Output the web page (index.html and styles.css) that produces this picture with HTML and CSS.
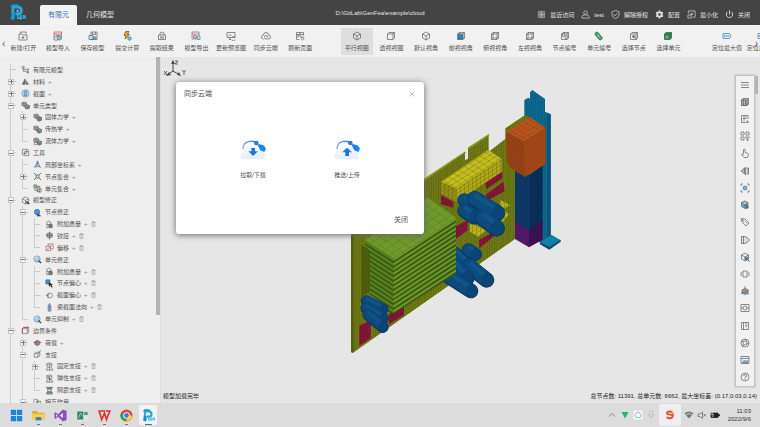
FILE: index.html
```html
<!DOCTYPE html>
<html lang="zh-CN">
<head>
<meta charset="utf-8">
<title>GenFea</title>
<link rel="stylesheet" href="styles.css">
</head>
<body>
<header class="titlebar">
  <svg class="logo" viewBox="0 0 48 48" aria-hidden="true"><use href="#brand"/></svg>
  <nav class="tabs">
    <button class="tab tab-active">有限元</button>
    <button class="tab">几何模型</button>
  </nav>
  <div class="path">D:\GitLab\GenFea\example\cloud</div>
  <div class="actions" id="actions"></div>
</header>
<div class="ribbon"><div class="ribbon-grid" id="ribbon"></div><span class="arrow arrow-left">‹</span><span class="arrow arrow-right">›</span></div>
<div class="workspace">
  <aside class="sidebar">
    <ul class="tree" id="tree" role="tree"></ul>
    <div class="scroll-thumb"></div>
  </aside>
  <main class="canvas">
    <svg class="axes" viewBox="0 0 26 20" aria-hidden="true">
      <path d="M10 12V2M10 12L4 16M10 12l7 4" stroke="#444" fill="none"/>
      <path d="M10 1l-2 4h4zM3 17l5-1-2-3zM18 17l-2-4-2 3z" fill="#4a4a4a"/>
      <path d="M12 2h3l-3 3h3M1 12l3 4m0-4l-3 4M19 11l2 2 2-2m-2 2v3" stroke="#444" fill="none" stroke-width=".8"/>
    </svg>
    <svg class="model" id="model" viewBox="0 0 690 810" role="img" aria-label="模型"></svg>
    <div class="status"><span>模型加载完毕</span><span>总节点数: 11391, 总单元数: 6662, 最大坐标差: (0.17,0.03,0.14)</span></div>
    <div class="toolstrip" id="toolstrip"></div>
    <section class="dialog" role="dialog" aria-labelledby="dlg-title">
      <div class="dialog-head">
        <h2 id="dlg-title">同步云端</h2>
        <button class="dialog-x" aria-label="关闭"><svg viewBox="0 0 10 10"><path d="M1 1l8 8M9 1L1 9" stroke="#999" fill="none"/></svg></button>
      </div>
      <div class="dialog-body">
        <button class="card"><svg viewBox="0 0 84 72"><use href="#cloud"/><path d="M37 30h11v10h9L42 54 28 40h9z" fill="#1676ea"/></svg>拉取/下载</button>
        <button class="card"><svg viewBox="0 0 84 72"><use href="#cloud"/><path d="M37 54h11V43h9L42 29 28 43h9z" fill="#1676ea"/></svg>推送/上传</button>
      </div>
      <div class="dialog-foot"><button>关闭</button></div>
    </section>
  </main>
</div>
<footer class="taskbar">
  <div class="apps" id="apps"></div>
  <div class="tray" id="tray"></div>
  <div class="clock"><span>11:03</span><span>2022/9/6</span></div>
</footer>
<svg class="defs" aria-hidden="true">
  <defs>
    <linearGradient id="cg" x1="0" y1="0" x2="0" y2="1"><stop offset="0" stop-color="#fafcff"/><stop offset="1" stop-color="#e6eefb"/></linearGradient>
    <linearGradient id="ag" x1="0" y1="0" x2="1" y2="0"><stop offset="0" stop-color="#8e9cf0"/><stop offset="1" stop-color="#1d7cf0"/></linearGradient>
    <symbol id="brand" viewBox="0 0 48 48">
      <path d="M11 39V9h13q11 0 11 10 0 9-11 9h-6" fill="none" stroke="#27a8e0" stroke-width="8"/>
      <path d="M2 8l8-7h14l10 6H14zM7 26h10v14l-4 6-9-4z" fill="#1792cc"/>
      <path d="M22 16l6 3-6 4z" fill="#d8f3ff"/>
      <path d="M29 33h-5v8h5v-4M37 33h-5v9h5M32 37h4M40 42v-9h6v9M40 37h5" fill="none" stroke="#2bb5e8" stroke-width="3"/>
    </symbol>
    <symbol id="cloud" viewBox="0 0 84 72">
      <path d="M14 64Q2 63 4 50q2-9 12-11 2-18 20-20 17-2 24 16 16 0 18 15 0 13-14 14z" fill="url(#cg)"/>
      <path d="M12 34Q12 15 28 11q15-4 27 5" stroke="url(#ag)" stroke-width="4" fill="none"/>
      <circle cx="52" cy="15" r="7" fill="#2c78ee"/>
      <path d="M55 19q13-2 20 4l6 9-5 10-12-5-7-13z" fill="#1486f5"/>
    </symbol>
  </defs>
</svg>
<script src="app.js"></script>
</body>
</html>
```
FILE: styles.css
```css
* { box-sizing: border-box; }
body {
  margin: 0;
  height: 100vh;
  display: flex;
  flex-direction: column;
  overflow: hidden;
  font: 6px/8px "Liberation Sans", "Noto Sans CJK SC", sans-serif;
  color: #505050;
  background: #e6e6e6;
}
button {
  border: 0;
  padding: 0;
  margin: 0;
  background: none;
  font: inherit;
  color: inherit;
}
svg { display: block; }
.defs { position: absolute; width: 0; height: 0; }
.ico { width: 10px; height: 10px; flex: none; fill: none; stroke: #666; stroke-width: 1.5; }

.titlebar {
  position: relative;
  flex: none;
  height: 25px;
  display: flex;
  align-items: flex-end;
  background: #444;
  color: #e4e4e4;
}
.logo { width: 17px; height: 17px; margin: 0 14px 4px 9px; }
.tabs { display: flex; }
.tab { height: 20px; padding: 0 9px; font-size: 7px; border-radius: 2px 2px 0 0; }
.tab-active { padding: 0 8px; background: #f3f3f3; color: #3e6fc4; }
.path { position: absolute; left: 50%; top: 9px; transform: translateX(-50%); }
.actions { margin-left: auto; display: flex; gap: 7px; padding: 0 10px 6px 0; }
.actions button { display: flex; align-items: center; gap: 4px; }
.actions .ico { width: 9px; height: 9px; stroke: #e0e0e0; }

.ribbon { position: relative; flex: none; height: 32px; overflow: hidden; background: #f1f1f1; }
.ribbon-grid {
  display: grid;
  grid-template-columns: repeat(9, 1fr) 22px repeat(10, 1fr) 24px repeat(2, 1fr);
  margin: 3px -19px 0 6px;
}
.ribbon button {
  display: flex;
  flex-direction: column;
  align-items: center;
  gap: 3px;
  height: 27px;
  padding-top: 3px;
  margin: 0 1px;
  min-width: 0;
  white-space: nowrap;
}
.ribbon .on { background: #dedede; }
.arrow { position: absolute; top: 15px; font-size: 10px; }
.arrow-left { left: 2px; }
.arrow-right { right: 2px; }

.workspace { flex: 1; min-height: 0; display: flex; }
.sidebar {
  position: relative;
  flex: none;
  width: 161px;
  display: flex;
  overflow: hidden;
  background: #eee;
  border-right: 1px solid #dcdcdc;
}
.tree {
  flex: 1;
  display: grid;
  grid-auto-rows: 1fr;
  margin: 7px 0 -5px 5px;
  padding: 0;
  list-style: none;
}
.tree li { display: flex; align-items: center; min-height: 0; white-space: nowrap; }
.rail { align-self: stretch; position: relative; width: 12px; flex: none; }
.rail-line { background: linear-gradient(#ccc, #ccc) 5px 0 / 1px 100% no-repeat; }
.rail-tee { background: linear-gradient(#ccc, #ccc) 5px 0 / 1px 100% no-repeat, linear-gradient(#ccc, #ccc) 5px 50% / 6px 1px no-repeat; }
.rail-end { background: linear-gradient(#ccc, #ccc) 5px 0 / 1px 50% no-repeat, linear-gradient(#ccc, #ccc) 5px 50% / 6px 1px no-repeat; }
.toggle {
  position: absolute;
  left: 3px;
  top: 3px;
  width: 6px;
  height: 6px;
  border: 1px solid #c4c4c4;
  background: linear-gradient(#777, #777) center / 4px 1px no-repeat #f8f8f8;
}
.toggle-plus { background: linear-gradient(#777, #777) center / 4px 1px no-repeat, linear-gradient(#777, #777) center / 1px 4px no-repeat, #f8f8f8; }
.tree .ico { width: 9px; height: 9px; margin: 0 3px 0 4px; }
.add, .del { margin-left: 3px; color: #888; }
.del svg { width: 5px; height: 6px; fill: none; stroke: #888; }
.scroll-thumb { width: 4px; height: 258px; flex: none; background: #b3b3b3; }

.canvas { position: relative; flex: 1; min-width: 0; display: flex; flex-direction: column; justify-content: flex-end; }
.axes { position: absolute; left: 2px; top: 2px; width: 26px; height: 20px; }
.model { position: absolute; left: 179px; top: 28px; width: 230px; height: 270px; }
.status { display: flex; justify-content: space-between; padding: 0 3px 3px 2px; color: #222; }
.toolstrip {
  position: absolute;
  top: 18px;
  right: 5px;
  bottom: 16px;
  width: 20px;
  display: flex;
  flex-direction: column;
  justify-content: space-around;
  align-items: center;
  background: #f1f1f1;
  border: 1px solid #c2c2c2;
  box-shadow: 0 0 2px #aaa;
}
.toolstrip::after { content: ""; position: absolute; right: -4px; top: 0; width: 3px; height: 18px; background: #b5b5b5; }

.dialog {
  position: absolute;
  left: 15px;
  top: 25px;
  width: 248px;
  padding: 8px;
  background: #fff;
  border-radius: 3px;
  box-shadow: 0 1px 6px #666;
}
.dialog-head { display: flex; justify-content: space-between; align-items: center; height: 8px; }
.dialog h2 { margin: 0; font-size: 7px; font-weight: 400; }
.dialog-x svg { width: 6px; height: 6px; margin-right: 1px; }
.dialog-body { display: flex; justify-content: center; gap: 34px; padding: 32px 0 24px; }
.card { width: 60px; height: 62px; display: flex; flex-direction: column; align-items: center; gap: 9px; padding-top: 8px; box-shadow: 0 0 4px #fafafa; }
.card svg { width: 28px; height: 24px; }
.dialog-foot { display: flex; justify-content: flex-end; padding: 0 8px 2px 0; font-size: 7px; }

.taskbar { flex: none; height: 24px; display: flex; align-items: center; background: #dcdcdc; }
.apps { display: flex; gap: 4px; padding-left: 7px; }
.apps button { position: relative; width: 18px; height: 20px; display: grid; place-items: center; border-radius: 2px; }
.apps svg { width: 13px; height: 13px; }
.apps button::after { content: ""; position: absolute; bottom: 0; left: 8px; width: 3px; height: 1px; background: #777; }
.apps button:first-child::after { display: none; }
.apps .open { background: #f3f3f3; }
.apps .open::after { left: 6px; width: 7px; background: #147fc4; }
.tray { margin-left: auto; display: flex; align-items: center; gap: 3px; padding-right: 6px; }
.tray .ime { width: 22px; height: 22px; display: grid; place-items: center; background: #f0eeee; border-radius: 2px; }
.clock { display: flex; flex-direction: column; align-items: flex-end; width: 25px; margin-right: 9px; color: #333; }
```
FILE: app.js
```js
const cube = '<path d="M10 2l7 4v8l-7 4-7-4V6zM3 6l7 4 7-4M10 10v8"/>';
const box = '<path d="M3 6h11v11H3zM3 6l3-3h11v11l-3 3M14 6l3-3"/>';
const boxWire = box + '<path d="M6 3v11h11M6 14l-3 3"/>';
const cells = '<path d="M2 4l5-2 5 2v6l-5 2-5-2zM2 4l5 2 5-2M7 6v6" fill="#aaa"/><path d="M9 10l5-2 5 2v6l-5 2-5-2zM9 10l5 2 5-2M14 12v6" fill="#888"/>';
const globe = '<circle cx="9" cy="9" r="7" fill="#a9cdea" stroke="#6f8aa0"/><path d="M4 8q1-4 5-4" stroke="#fff"/><path d="M12 12l6 6" stroke="#444" stroke-width="3"/>';
const support = '<path d="M4 4l6-2 5 2v6l-5 2-6-2zM4 4l6 2 5-2M10 6v6M3 18h15M6 12l-3 6M14 12l3 6M10 12v6"/>';
const icons = {
  grid: '<path d="M3 3h14v14H3zM3 7h14M3 10h14M3 13h14M7 3v14M10 3v14M13 3v14" stroke-width="1"/>',
  user: '<circle cx="10" cy="6" r="4"/><path d="M2 18v-3q0-4 6-4h4q6 0 6 4v3z"/>',
  shield: '<path d="M10 1l8 3v6q0 6-8 9-8-3-8-9V4zM6 9l3 4 5-6"/>',
  gearBold: '<circle cx="10" cy="10" r="5" stroke-width="4"/><path d="M10 1v3M10 16v3M2 6l3 1M15 13l3 1M2 14l3-1M15 7l3-1" stroke-width="3"/>',
  minimize: '<path d="M3 8V2h15v14h-6M2 11h7v7H2zM9 10l5-5M9 6v4h4"/>',
  power: '<path d="M6 4a7 7 0 1 0 8 0M10 1v9" stroke-width="2"/>',
  folderNew: '<path d="M2 6h6l2 2h8v10H2zM5 5V2h11v5M10 10v6M7 13h6"/>',
  importModel: '<path d="M2 12V2h15v13M2 6h15" stroke="#b55"/><path d="M5 9h9M2 12h8v6H2z"/><circle cx="13" cy="14" r="4" fill="#8cc7e5" stroke="#478"/>',
  save: '<path d="M6 2h12v15H6zM9 2v5h6V2"/><path d="M2 9h8v8H2z" fill="#cde"/><circle cx="13" cy="14" r="3" fill="#5bb5d8" stroke="#478"/>',
  calc: '<path d="M7 1h7l-3 6h4l-9 9 2-7H4z" fill="#e3a92c" stroke="#7a5a1a"/><circle cx="15" cy="15" r="3.5" fill="#7cc3e0" stroke="#478"/>',
  extract: '<path d="M3 8h14v9H3zM6 8V4l4-2 4 2v4M6 12h8M6 14h8"/>',
  exportModel: '<path d="M2 2h14v8M2 2v14h8M2 6h14" stroke="#a66"/><path d="M5 9h5v5H5z"/><path d="M12 10h6v7h-6zM9 14h7" stroke="#48a"/>',
  preview: '<path d="M2 3h16v10H2zM6 17h4M8 13v4M5 10l3-3 3 3"/><path d="M12 14a3 3 0 0 1 6 0M18 17a3 3 0 0 1-6 0" stroke="#47a"/>',
  sync: '<path d="M5 16a4 4 0 0 1 0-8 5 5 0 0 1 10 0 4 4 0 0 1 0 8h-2M7 12a3 3 0 0 1 6 0M13 13a3 3 0 0 1-6 0"/>',
  refresh: '<path d="M9 17H3V3h14v6M3 7h14M6 7v6M10 3v6M6 10h5M12 14a3 3 0 1 1 1 3M12 11v3h3"/>',
  cube, box, boxWire,
  front: boxWire + '<path d="M5 7h8v9H5z" fill="#2b8bc4" stroke="#26658c"/>',
  nodeNo: box + '<circle cx="7" cy="8" r="3" fill="#d6d6c0"/><circle cx="13" cy="13" r="3" fill="#ddd"/>',
  link: '<path d="M3 3l4-1 10 12-3 4-4-1L2 7z" fill="#4aa070" stroke="#27704a"/><path d="M7 8l4 4" stroke="#fff"/>',
  pickNode: box + '<circle cx="9" cy="11" r="2" fill="#777"/><path d="M9 11l7 6"/>',
  pickCell: '<path d="M3 6h11v11H3zM3 6l3-3h11v11l-3 3M14 6l3-3" fill="#2f9a5c" stroke="#1f6840"/><path d="M6 10h5v4H6z" fill="#bfe3cf"/>',
  max: '<path d="M2 5h13l3 5-3 5H2z" fill="#e4effa" stroke="#3f7fb8"/><path d="M5 12V8l2 3 2-3v4M11 8l3 4M14 8l-3 4" stroke="#3f7fb8" stroke-width="1"/>',
  root: '<path d="M3 3h4v4H3zM5 7v7h7M5 10h7"/><circle cx="15" cy="10" r="2"/><circle cx="15" cy="16" r="2" fill="#5aa0d0"/>',
  material: '<path d="M3 16L9 4v12z" fill="#4b6b50"/><path d="M11 16V8l6 8z" fill="#8a8a8a"/>',
  section: '<circle cx="10" cy="10" r="8" fill="#d8e9f6" stroke="#5b7fa0"/><path d="M7 5h6v10H7z" fill="#8cb8e2" stroke="#47a"/>',
  cells, cellsBlue: cells + '<path d="M14 9l4 2v5l-4 2z" fill="#5aa0d0"/>',
  cellsRed: cells + '<path d="M3 10v7h7" stroke="#c44"/><path d="M13 10l4 2-3 5z" fill="#48b" stroke="none"/>',
  tools: '<path d="M3 3h9v9H3zM8 8h9v9H8z"/><path d="M12 2l6 4M2 13l4 5"/>',
  axes: '<path d="M10 2L5 15h10zM10 2v9M10 11l-8 6M10 11l8 6" stroke="#4a6a90"/>',
  nodes: '<path d="M7 7h6v6H7zM2 2l5 5M18 2l-5 5M2 18l5-5M18 18l-5-5" stroke-width="2"/>',
  set: '<path d="M2 2h6v6H2zM9 5h6v12H9z" fill="#a9b9a9"/><path d="M4 8v6h6M15 10h3v8h-6"/>',
  cubeMark: cube + '<path d="M12 12l6 6" stroke="#222" stroke-width="3"/>',
  nodeFix: '<circle cx="9" cy="9" r="6" fill="#4d94d6" stroke="#336aa0"/><path d="M11 12l6 6h-8z" fill="#333"/>',
  mass: '<path d="M4 5l5-3 4 3v5H4zM4 10v7h12v-7h-3" /><circle cx="12" cy="13" r="4" fill="#777"/>',
  hinge: '<path d="M10 1v18M4 6l6-2 6 2v7l-6 3-6-3z" fill="#9aa6a6"/><path d="M2 10h16"/>',
  offset: '<path d="M2 7h10v10H2zM7 7V2h11v11h-6" stroke="#a55"/><path d="M4 15L15 5"/>',
  globe,
  eccNode: '<path d="M2 2h9v9H2z" fill="#3e8fd0" stroke="#26608c"/><path d="M8 8l10 4-4 1 3 5-3 1-2-5-3 3z" fill="#222" stroke="none"/>',
  eccSec: '<path d="M2 10h4M7 5h7l3 5-3 5H7zM7 5l-2 5 2 5"/>',
  beam: '<path d="M7 6h6v12H7z" fill="#8fb7d8"/><path d="M10 1v12M7 4l3-3 3 3" stroke="#47a"/>',
  boundary: box + '<path d="M3 6l3-3h11M3 6v11" stroke="#c44" stroke-width="2"/>',
  load: '<path d="M4 8l6-3 5 3v6l-5 3-6-3z" fill="#8b8b8b"/><path d="M1 10h8M6 7l3 3-3 3M14 10h5" stroke="#c33"/>',
  brace: '<path d="M3 8h8v8H3zM3 8l4-3h8l-4 3M15 5v8l-4 3"/><path d="M13 5l5-4" stroke="#3a9a5c" stroke-width="2"/>',
  support, elastic: support + '<path d="M6 7l8 6" stroke-width="2"/>',
  wall: '<path d="M3 3h14l-3 4H6zM3 16h14l-3-4H6z" fill="#6b8fa6"/><path d="M6 7v5M14 7v5M3 18h14"/>',
  contact: '<path d="M2 3h8v13H2z" stroke="#3a9a6c"/><path d="M8 7h9v10H8zM12 7v10" />',
  menu: '<path d="M2 5h16M2 10h16M2 15h16"/>',
  layers: boxWire + '<path d="M3 6h11v11H3z" fill="#9fb9c9"/><path d="M7 6v11M11 6v11"/>',
  list: '<path d="M16 10V3H3v14h9M6 6h7M6 9h7M6 12h4M15 13v5M12 16h6"/>',
  filter: '<path d="M2 2h6v6H2zM2 12h6v6H2zM12 2h6v6h-6zM11 12h8l-3 3v4h-2v-4z"/>',
  hand: '<path d="M7 12V3q1-2 3 0v6l6 2q2 1 1 3l-2 5H8l-5-6q1-2 4 0"/>',
  mirror: '<path d="M11 2v16M9 4L2 10l7 6zM13 4h4v12h-4" fill="#bbb"/>',
  focus: '<path d="M2 6V2h4M14 2h4v4M18 14v4h-4M6 18H2v-4"/><circle cx="10" cy="10" r="4" fill="#7eb5e2" stroke="#47a"/>',
  cubeBlue: '<path d="M3 5l6-3 7 3v8l-6 4-7-4zM3 5l7 4 6-4M10 9v8" fill="#6aa6d2"/><path d="M10 8l7 6-3 4z" fill="#2472b2"/>',
  tag: '<path d="M2 3l8 1 8 8-6 6-8-8z"/><circle cx="6" cy="7" r="1.5"/><path d="M10 9l4 4"/>',
  cut: '<path d="M3 3h6q7 2 10 7-3 5-10 7H3zM7 3v14" fill="#ddd"/>',
  cubeZoom: cube + '<circle cx="13" cy="13" r="3" fill="#3687c8"/><path d="M15 15l4 4" stroke="#246" stroke-width="2"/>',
  spin: '<path d="M6 4h8v12H6zM3 6q-3 4 0 8M17 6q3 4 0 8"/>',
  axis3: '<path d="M4 8l6-3 6 3v6l-6 3-6-3z" fill="#999"/><path d="M10 6V1M10 12l8-4" stroke="#d0542c" stroke-width="2"/><path d="M10 12l-8 3M12 15l6 1" stroke="#38c" stroke-width="2"/>',
  display: '<path d="M2 3h16v14H2z"/><circle cx="10" cy="10" r="4"/><path d="M2 10h4M14 10h4"/>',
  ruler: '<path d="M3 3h14v14H3zM7 3v14M12 3v8l3-2"/>',
  settings: '<circle cx="10" cy="10" r="8"/><circle cx="10" cy="10" r="4"/><path d="M10 2l3 5M18 10l-5 2M5 17l2-4M3 6l5 1"/>',
  picture: '<path d="M2 3h16v14H2zM2 7h16"/><path d="M5 14l4-4 3 3 3-2v4H5z" fill="#8fb7d8" stroke="#47a"/>',
  help: '<circle cx="10" cy="10" r="8"/><path d="M7 8q0-3 3-3t3 3q0 2-3 3v2M10 14v2"/>'
};
const svg = n => `<svg class="ico" viewBox="0 0 20 20" aria-hidden="true">${icons[n]}</svg>`;
const fill = (id, html) => { document.getElementById(id).innerHTML = html; };

fill('actions', [['grid', '最近访问'], ['user', 'test'], ['shield', '解除授权'], ['gearBold', '配置'], ['minimize', '最小化'], ['power', '关闭']]
  .map(([i, t]) => `<button>${svg(i)}${t}</button>`).join(''));

fill('ribbon', [['folderNew', '新建/打开'], ['importModel', '模型导入'], ['save', '保存模型'], ['calc', '提交计算'], ['extract', '提取结果'],
  ['exportModel', '模型导出'], ['preview', '更新预览图'], ['sync', '同步云端'], ['refresh', '刷新页面'], null,
  ['cube', '平行视图'], ['box', '透视视图'], ['cube', '默认视角'], ['front', '前视视角'], ['boxWire', '俯视视角'], ['boxWire', '左视视角'],
  ['nodeNo', '节点编号'], ['link', '单元编号'], ['pickNode', '选择节点'], ['pickCell', '选择单元'], null, ['max', '定位最大值'], ['max', '定位最小值']]
  .map(b => b ? `<button class="${b[1] === '平行视图' ? 'on' : ''}">${svg(b[0])}${b[1]}</button>` : '<span></span>').join(''));

fill('toolstrip', ['menu', 'layers', 'list', 'filter', 'hand', 'mirror', 'focus', 'cubeBlue', 'tag', 'cut', 'cubeZoom', 'spin', 'axis3', 'display', 'ruler', 'settings', 'picture', 'help']
  .map(n => `<button aria-label="${n}">${svg(n)}</button>`).join(''));

/* rails: "|" line, "t" tee, "e" end, "+"/"-" toggle; marks: a = add, d = delete */
const rows = [
  ['t', 'root', '有限元模型', ''], ['+', 'material', '材料', 'a'], ['+', 'section', '截面', 'a'], ['-', 'cells', '单元类型', ''],
  ['|+', 'cellsBlue', '固体力学', 'a'], ['|t', 'cells', '传热学', 'a'], ['|e', 'cellsRed', '流体力学', 'a'],
  ['-', 'tools', '工具', ''], ['|t', 'axes', '局部坐标系', 'a'], ['|+', 'nodes', '节点集合', 'a'], ['|e', 'set', '单元集合', 'a'],
  ['-', 'cubeMark', '模型修正', ''], ['|-', 'nodeFix', '节点修正', ''], ['||t', 'mass', '附加质量', 'ad'], ['||t', 'hinge', '铰接', 'ad'], ['||e', 'offset', '偏移', 'ad'],
  ['|-', 'globe', '单元修正', ''], ['||t', 'mass', '附加质量', 'ad'], ['||t', 'eccNode', '节点偏心', 'ad'], ['||t', 'eccSec', '截面偏心', 'ad'], ['||e', 'beam', '梁截面法向', 'ad'],
  ['|e', 'globe', '单元抑制', 'ad'], ['-', 'boundary', '边界条件', ''], ['|+', 'load', '荷载', 'a'], ['|-', 'brace', '支接', ''],
  ['||+', 'support', '固定支接', 'ad'], ['||t', 'elastic', '弹性支接', 'ad'], ['||e', 'wall', '隔震支接', 'ad'], ['|-', 'contact', '相互作用', '']
];
const railClass = { '|': 'rail-line', t: 'rail-tee', e: 'rail-end', '+': 'rail-tee', '-': 'rail-tee' };
const bin = '<svg viewBox="0 0 10 12"><path d="M1 3h8M3 3V1h4v2M2 3v8h6V3M5 5v4"/></svg>';
fill('tree', rows.map(([r, i, t, m]) => `<li role="treeitem" aria-level="${r.length}">` +
  [...r].map(c => `<span class="rail ${railClass[c]}">${c === '+' ? '<button class="toggle toggle-plus" aria-label="展开"></button>' : c === '-' ? '<button class="toggle" aria-label="折叠"></button>' : ''}</span>`).join('') +
  svg(i) + `<span>${t}</span>` + (m.includes('a') ? '<button class="add">+</button>' : '') +
  (m.includes('d') ? `<button class="del" aria-label="删除">${bin}</button>` : '') + '</li>').join(''));

const apps = {
  '开始': '<path d="M2 2h13v13H2zM17 2h13v13H17zM2 17h13v13H2zM17 17h13v13H17z" fill="#1686d9"/>',
  '文件': '<path d="M1 5h11l3 4h16v18H1z" fill="#e9a92b"/><path d="M1 12h30v15H1z" fill="#fbcf52"/><path d="M9 20h14v8H9z" fill="#2d83c9"/>',
  'Visual Studio': '<path d="M22 1l9 4v22l-9 4L10 19l-6 5-3-2V10l3-2 6 5z" fill="#8451c4"/><path d="M22 10v12l-8-6z" fill="#e6e0ee"/><path d="M5 12v8l4-4z" fill="#e6e0ee"/>',
  '监视器': '<path d="M1 4h30v24H1z" fill="#dfe8e4"/><path d="M3 6h15v20H3z" fill="#3d8368"/><path d="M20 7h9v8h-9z" fill="#65917e"/><path d="M6 22l5-12 5 8" stroke="#a8d6bf" stroke-width="2" fill="none"/>',
  'WPS': '<path d="M1 5h17M3 5l6 21 7-16 5 16 8-21h-9" fill="none" stroke="#dd3325" stroke-width="4"/>',
  'Chrome': '<circle cx="16" cy="16" r="15" fill="#dd4635"/><path d="M16 16L3 9a15 15 0 0 0 11 22z" fill="#2e9e50"/><path d="M16 16h15a15 15 0 0 1-17 15l6-11z" fill="#f8c932"/><circle cx="16" cy="16" r="8" fill="#fff"/><circle cx="16" cy="16" r="6" fill="#3b7de0"/>',
  'GenFea': '<use href="#brand"/>'
};
fill('apps', Object.entries(apps).map(([n, s]) => `<button aria-label="${n}" class="${n === 'GenFea' ? 'open' : ''}"><svg viewBox="0 0 32 32">${s}</svg></button>`).join(''));
const t = s => `<svg class="ico" viewBox="0 0 20 20">${s}</svg>`;
fill('tray', t('<path d="M4 13l6-6 6 6"/>') + t('<path d="M3 4h14l-3 6-4 7-3-6z" fill="#29b765" stroke="none"/>') +
  t('<path d="M1 1h18v18H1z" fill="#f4f6f8" stroke="none"/><path d="M6 15a4 4 0 0 1 0-7 4 4 0 0 1 8 0 4 4 0 0 1 0 7z" stroke="#8aa4ba"/>') + t('<path d="M7 2h6v8H7zM4 8q0 6 6 6t6-6M10 14v4" stroke="#bbb"/>') +
  '<span class="ime">' + t('<path d="M15 4q-10-3-11 2 0 3 6 3 6 1 5 5-2 4-12 1" stroke="#e85329" stroke-width="4"/><path d="M16 6v6" stroke="#e85329" stroke-width="3"/>') + '</span>' +
  t('<path d="M1 7q9-8 18 0L10 17z" fill="#777" stroke="none"/><path d="M3 10q7-6 14 0" stroke="#ddd"/>') + t('<path d="M2 8h4l5-4v13l-5-4H2zM13 8l5 5M18 8l-5 5"/>') +
  t('<path d="M2 6h14v9H2zM17 9h2v3h-2z" fill="#222" stroke="#222"/><path d="M6 3l-3 6h4l-2 5" stroke="#ddd"/>'));

/* finite element model */
const poly = (p, f, m) => `<polygon points="${p}" fill="${f}"/>` + (m ? `<polygon points="${p}" fill="url(#${m})"/>` : '');
const mesh = (id, w, h, tr, c, s = 1.5) => `<pattern id="${id}" width="${w}" height="${h}" patternUnits="userSpaceOnUse" patternTransform="${tr}"><path d="M0 0H${w}M0 0V${h}" stroke="${c}" stroke-width="${s}"/></pattern>`;
const tube = (x, y, x2, y2, r) => `<path d="M${x} ${y}L${x2} ${y2}" stroke="#093a66" stroke-width="${2 * r}" stroke-linecap="round"/><path d="M${x} ${y - 2}L${x2} ${y2 - 2}" stroke="#0d4a7d" stroke-width="${2 * r - 6}" stroke-linecap="round"/><path d="M${x} ${y - r / 2}L${x2 - 3} ${y2 - r / 2}" stroke="#10568a" stroke-width="${r / 2}"/><ellipse cx="${x2 + 2}" cy="${y2}" rx="${r * .7}" ry="${r * .9}" fill="#0b4576" stroke="#093a64" stroke-width="1"/>`;
let fins = '';
for (let k = 11; k >= 0; k--) {
  const y = k * 14, l = Math.min(90, 75 + k * 8);
  const ly = 465 + (l - 75) * .65;
  fins += poly(`${l},${ly + y} 160,${520 + y} 348,${398 + y} 348,${412 + y} 160,${534 + y} ${l},${ly + 14 + y}`, '#34570f');
  fins += poly(`${l},${ly + y} 160,${520 + y} 160,${529 + y} ${l},${ly + 9 + y}`, '#587f21') + poly(`160,${520 + y} 348,${398 + y} 348,${406 + y} 160,${529 + y}`, '#6d942b');
}
const reds = ['303,330 340,350 340,368 303,358', '435,295 487,260 487,280 440,312', '437,330 490,290 494,318 445,345', '345,425 383,405 383,435 347,462', '417,465 462,440 460,455 418,490', '58,722 92,705 92,760 58,782', '147,688 192,662 192,690 147,718']
  .map(p => poly(p, '#85153a', 'mr')).join('');
fill('model', '<defs>' +
  mesh('mb', 7, 9, 'skewY(-34)', '#465009', 2) + mesh('mo', 8, 9, 'skewY(-32)', '#7a300c') + mesh('mot', 14, 12, 'matrix(1 -.6 .9 .5 0 0)', '#7a300c') +
  mesh('my', 12, 12, 'skewY(-33)', '#5e5c08', 2) + mesh('myt', 16, 14, 'matrix(1 -.65 .9 .5 0 0)', '#6f6d08', 2) + mesh('mg', 24, 22, 'matrix(.84 -.55 .83 .56 0 0)', '#3f6511', 1.5) +
  mesh('mn', 8, 9, 'skewY(-30)', '#0a2549') + mesh('mt', 9, 9, 'skewY(32)', '#084866') + mesh('mr', 10, 12, 'skewY(-33)', '#5e0b28') + '</defs>' +
  poly('553,45 565,38 570,42 570,22 577,15 615,42 615,80 632,88 632,452 660,465 628,492 596,470 553,440', '#0d6a90', 'mt') +
  poly('622,84 632,88 632,455 622,460', '#0a5678') + poly('600,472 634,449 662,466 628,490', '#127fa6') + poly('600,472 628,486 662,464 662,470 628,494 600,478', '#084b69') +
  poly('33,802 33,436 252,282 375,200 375,226 384,221 384,188 446,148 446,200 496,162 496,130 555,90 570,98 570,260 525,300 525,462 38,804', '#747e14', 'mb') +
  poly('33,436 40,432 40,802 33,798', '#515c0c') + poly('252,282 375,200 379,202 252,289', '#8c9720') + poly('384,188 446,148 448,151 386,193', '#8c9720') +
  poly('64,480 90,494 90,620 64,635', '#4c6010', 'mb') +
  reds +
  poly('303,290 445,194 485,222 350,312', '#c4bd20', 'myt') + poly('303,290 350,312 350,350 303,326', '#948f12', 'my') + poly('350,312 485,222 485,260 350,350', '#b0a91a', 'my') +
  poly('390,415 440,435 415,455 390,440', '#bdb61c', 'my') + poly('480,345 510,360 490,372 506,388 488,412 480,400', '#bdb61c', 'my') +
  poly('525,250 570,270 570,450 525,425', '#0d3a6c', 'mn') + poly('570,270 608,240 608,425 570,450', '#0a2e59', 'mn') +
  poly('525,410 567,436 567,487 525,462', '#501867') + poly('567,436 608,408 608,464 567,487', '#3a104f') +
  poly('498,140 570,96 617,128 553,170', '#b8551d', 'mot') + poly('498,140 553,170 555,276 512,250 500,228', '#9a4418', 'mo') + poly('553,170 617,128 617,236 555,276', '#a84a19', 'mo') +
  tube(345, 505, 385, 535, 20) + tube(385, 495, 406, 508, 20) + tube(390, 545, 440, 585, 23) + tube(345, 545, 380, 580, 24) + tube(325, 575, 393, 618, 22) +
  fins + poly('75,465 262,337 348,398 160,520', '#709a2b', 'mg') +
  tube(372, 345, 400, 365, 20) + tube(404, 342, 472, 384, 24) + tube(374, 378, 402, 396, 22) + tube(430, 400, 470, 430, 25) +
  tube(78, 647, 130, 672, 16) + tube(78, 670, 130, 700, 17) + tube(85, 690, 128, 726, 18));
```
